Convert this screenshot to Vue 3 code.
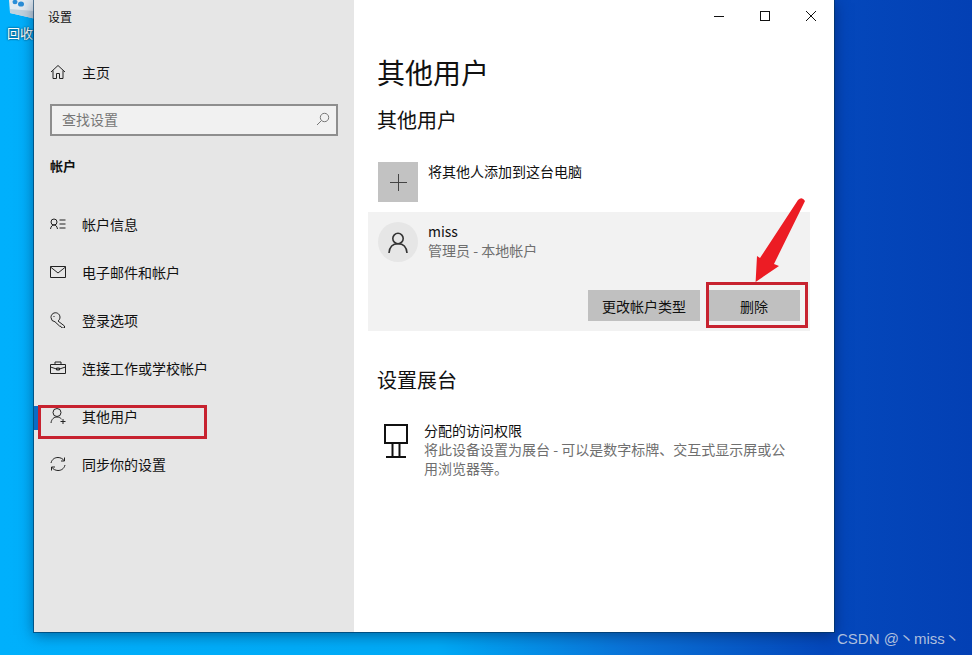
<template>
  <div class="desktop">
    <div class="bin">
      <svg class="bin-icon" width="34" height="20" viewBox="0 0 34 20">
        <path d="M9 0 L10 13 L34 18.5 V0 Z" fill="#e3ebf1" />
        <path d="M10 9 L10 13 L34 18.5 V11 Z" fill="#c2d3df" />
        <ellipse cx="15" cy="2" rx="2.5" ry="2.2" fill="#2a8ed8" />
        <ellipse cx="21" cy="4" rx="3" ry="2.6" fill="#2a8ed8" />
      </svg>
      <span class="bin-label">回收站</span>
    </div>

    <div class="window">
      <aside class="sidebar">
        <div class="app-title">设置</div>
        <a class="home">
          <svg class="icon" width="16" height="16" viewBox="0 0 16 16" fill="none" stroke="#222" stroke-width="1">
            <path d="M1 8 L8 1.5 L15 8 M3 6.5 V14.5 H6.5 V9.5 H9.5 V14.5 H13 V6.5" />
          </svg>
          <span>主页</span>
        </a>
        <div class="search">
          <span class="search-text">查找设置</span>
          <svg width="14" height="14" viewBox="0 0 14 14" fill="none" stroke="#777" stroke-width="1">
            <circle cx="8.5" cy="5.5" r="4.2" />
            <path d="M5.5 8.5 L1 13" />
          </svg>
        </div>
        <div class="section">帐户</div>
        <nav class="nav">
          <a v-for="item in navItems" :key="item.label" class="nav-item" :class="{ active: item.active }">
            <svg class="icon" width="16" height="16" viewBox="0 0 16 16" fill="none" stroke="#222" stroke-width="1">
              <path :d="item.icon" />
            </svg>
            <span>{{ item.label }}</span>
          </a>
        </nav>
      </aside>

      <main class="content">
        <div class="controls">
          <svg width="12" height="12" viewBox="0 0 12 12" fill="none" stroke="#111" stroke-width="1">
            <path d="M1 6.5 H11" />
          </svg>
          <svg width="12" height="12" viewBox="0 0 12 12" fill="none" stroke="#111" stroke-width="1">
            <rect x="1.5" y="1.5" width="9" height="9" />
          </svg>
          <svg width="12" height="12" viewBox="0 0 12 12" fill="none" stroke="#111" stroke-width="1">
            <path d="M1 1 L11 11 M11 1 L1 11" />
          </svg>
        </div>

        <h1>其他用户</h1>
        <h2>其他用户</h2>

        <div class="add-row">
          <div class="add-box">
            <svg width="17" height="17" viewBox="0 0 17 17" stroke="#444" stroke-width="1">
              <path d="M8.5 0 V17 M0 8.5 H17" />
            </svg>
          </div>
          <span>将其他人添加到这台电脑</span>
        </div>

        <div class="user-card">
          <div class="user-row">
            <div class="avatar">
              <svg width="20" height="21" viewBox="0 0 20 21" fill="none" stroke="#333" stroke-width="1.6">
                <circle cx="10" cy="6.5" r="5.2" />
                <path d="M1 21 C1.5 15 5 11.8 10 11.8 C15 11.8 18.5 15 19 21" />
              </svg>
            </div>
            <div class="user-text">
              <div>miss</div>
              <div class="muted">管理员 - 本地帐户</div>
            </div>
          </div>
          <div class="user-actions">
            <button class="change">更改帐户类型</button>
            <button class="remove">删除</button>
          </div>
        </div>

        <h2 class="kiosk-title">设置展台</h2>

        <div class="kiosk">
          <svg width="24" height="34" viewBox="0 0 24 34" fill="none" stroke="#111" stroke-width="2">
            <rect x="1" y="1" width="22" height="18" />
            <path d="M8.5 19 V32 M15.5 19 V32 M2 33 H22" />
          </svg>
          <div class="kiosk-text">
            <div class="kiosk-name">分配的访问权限</div>
            <div class="muted">将此设备设置为展台 - 可以是数字标牌、交互式显示屏或公用浏览器等。</div>
          </div>
        </div>
      </main>
    </div>

    <div class="mark mark-nav"></div>
    <div class="mark mark-remove"></div>
    <svg class="arrow" width="60" height="90" viewBox="0 0 60 90">
      <path d="M48 4 Q52 0 55 5 L24 68 L29 70 L5.6 86 L7 60 L10 62 Z" fill="#ec1c24" />
    </svg>

    <div class="watermark">CSDN @丶miss丶</div>
  </div>
</template>

<script setup>
const navItems = [
  { label: '帐户信息', icon: 'M1 6 A3 3 0 1 1 7 6 A3 3 0 1 1 1 6 M0.5 13 C1 10 2.5 9 4 9 C5.5 9 7 10 7.5 13 M9.5 4 H15.5 M9.5 8 H15.5 M9.5 12 H15.5' },
  { label: '电子邮件和帐户', icon: 'M0.5 2.5 H15.5 V13.5 H0.5 Z M0.5 3 L8 9 L15.5 3' },
  { label: '登录选项', icon: 'M1 5.5 A4.5 4.5 0 1 1 8 9 L14.5 14 V16 H12 L11 14.5 L9.5 14 L5 9.8 A4.5 4.5 0 0 1 1 5.5 M3.5 4.5 H4.5' },
  { label: '连接工作或学校帐户', icon: 'M0.5 4.5 H15.5 V13.5 H0.5 Z M5 4.5 V2 H11 V4.5 M0.5 7 L6.5 9 H9.5 L15.5 7 M6.5 8 H9.5 V10 H6.5 Z' },
  { label: '其他用户', icon: 'M3 4.5 A4 4 0 1 1 11 4.5 A4 4 0 1 1 3 4.5 M1 15 C1.5 11 4 9 7 9 C9 9 10.5 10 11.5 11 M13 11 V16 M10.5 13.5 H15.5', active: true },
  { label: '同步你的设置', icon: 'M1 7 C2 3 5 1.5 8 1.5 C10.5 1.5 13 2.8 14.5 5 M14.5 1.5 V5 H11 M15 9 C14 13 11 14.5 8 14.5 C5.5 14.5 3 13.2 1.5 11 M1.5 14.5 V11 H5' }
]
</script>

<style scoped>
.desktop {
  position: relative;
  width: 972px;
  height: 655px;
  overflow: hidden;
  font-family: "Noto Sans CJK SC", "Noto Sans", sans-serif;
  font-size: 14px;
  color: #111;
  background: linear-gradient(90deg, #00b0fc 0%, #00aaf6 45%, #0a72d8 65%, #0448bc 85%, #0340b4 100%);
}

.bin {
  position: absolute;
  left: 0;
  top: 0;
  width: 40px;
}

.bin-icon {
  display: block;
}

.bin-label {
  position: absolute;
  left: 7px;
  top: 25px;
  font-size: 13px;
  line-height: 16px;
  white-space: nowrap;
  color: #fff;
  text-shadow: 0 0 2px #000;
}

.window {
  position: absolute;
  left: 34px;
  top: 0;
  width: 800px;
  height: 632px;
  display: flex;
  box-shadow: 0 0 0 1px rgba(0, 50, 90, 0.6), 0 3px 14px rgba(0, 20, 60, 0.5);
}

.sidebar {
  width: 320px;
  flex-shrink: 0;
  box-sizing: border-box;
  padding: 0 16px;
  background: #e6e6e6;
}

.app-title {
  height: 34px;
  line-height: 34px;
  font-size: 12px;
  margin-left: -2px;
}

.home {
  margin-top: 14px;
  height: 48px;
  display: flex;
  align-items: center;
  gap: 16px;
}

.icon {
  flex-shrink: 0;
}

.search {
  margin-top: 8px;
  width: 288px;
  height: 32px;
  box-sizing: border-box;
  border: 2px solid #8e8e8e;
  background: #f1f1f1;
  padding: 0 6px 2px 10px;
  display: flex;
  align-items: center;
  justify-content: space-between;
}

.search-text {
  color: #777;
}

.section {
  margin-top: 20px;
  height: 20px;
  line-height: 20px;
  font-size: 13px;
  font-weight: 700;
}

.nav {
  margin-top: 24px;
  margin-left: -16px;
}

.nav-item {
  position: relative;
  height: 48px;
  padding-left: 16px;
  display: flex;
  align-items: center;
  gap: 16px;
}

.nav-item.active::before {
  content: "";
  position: absolute;
  left: 0;
  top: 14px;
  width: 4px;
  height: 24px;
  background: #0a6cc4;
}

.content {
  flex: 1;
  position: relative;
  background: #fff;
  padding: 0 24px;
}

.controls {
  position: absolute;
  right: 17px;
  top: 10px;
  display: flex;
  gap: 34px;
}

h1 {
  margin: 49px 0 0 -1px;
  font-size: 28px;
  line-height: 46px;
  font-weight: 400;
}

h2 {
  margin: 9px 0 0 -1px;
  font-size: 20px;
  line-height: 32px;
  font-weight: 400;
}

.add-row {
  margin-top: 26px;
  display: flex;
  gap: 10px;
  height: 50px;
}

.add-row span {
  line-height: 20px;
  margin-top: -1px;
}

.add-box {
  width: 40px;
  height: 40px;
  background: #c2c2c2;
  display: flex;
  align-items: center;
  justify-content: center;
}

.user-card {
  margin-left: -10px;
  width: 442px;
  height: 119px;
  box-sizing: border-box;
  background: #f2f2f2;
  padding: 10px;
}

.user-row {
  display: flex;
  gap: 10px;
  height: 68px;
}

.avatar {
  width: 40px;
  height: 40px;
  border-radius: 50%;
  background: #e6e6e6;
  display: flex;
  align-items: center;
  justify-content: center;
}

.user-text {
  line-height: 19px;
}

.muted {
  color: #6f6f6f;
}

.user-actions {
  display: flex;
  justify-content: flex-end;
  gap: 8px;
}

button {
  height: 31px;
  border: none;
  padding: 0;
  background: #c0c0c0;
  color: #111;
  font: inherit;
  font-size: 14px;
}

.change {
  width: 112px;
}

.remove {
  width: 92px;
}

.kiosk-title {
  margin-top: 33px;
}

.kiosk {
  margin-top: 24px;
  display: flex;
  gap: 16px;
  padding-left: 6px;
}

.kiosk svg {
  flex-shrink: 0;
  margin-top: 4px;
}

.kiosk-text {
  width: 366px;
  line-height: 19px;
}

.kiosk-name {
  height: 20px;
  line-height: 20px;
}

.mark {
  position: absolute;
  box-sizing: border-box;
  border: 3px solid #c7222f;
}

.mark-nav {
  left: 38px;
  top: 405px;
  width: 169px;
  height: 34px;
}

.mark-remove {
  left: 706px;
  top: 282px;
  width: 102px;
  height: 46px;
}

.arrow {
  position: absolute;
  left: 750px;
  top: 196px;
}

.watermark {
  position: absolute;
  left: 837px;
  top: 630px;
  font-family: "Liberation Sans", "Noto Sans CJK SC", sans-serif;
  font-size: 15px;
  line-height: 18px;
  color: #aebfdd;
  white-space: nowrap;
}
</style>
